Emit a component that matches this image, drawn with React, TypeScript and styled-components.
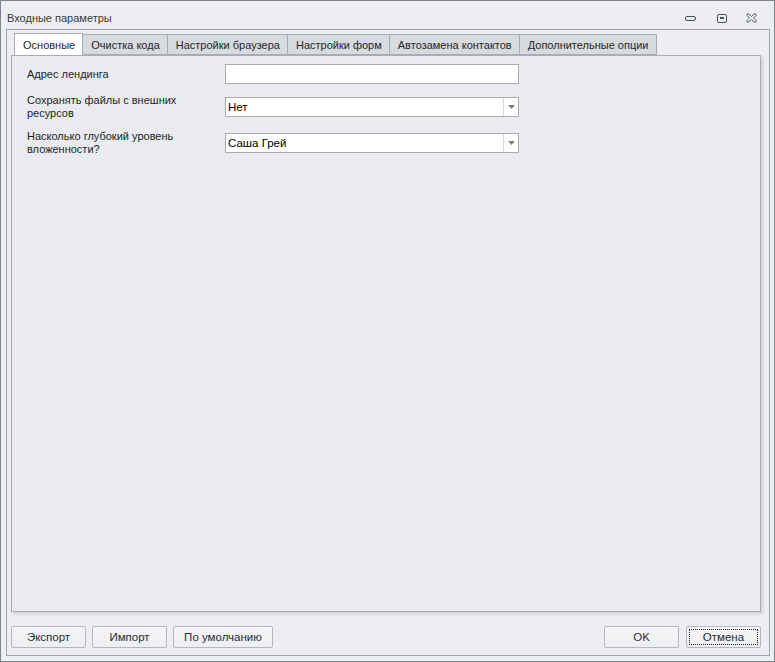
import React from "react";
import styled, { createGlobalStyle } from "styled-components";

const Global = createGlobalStyle`
  html, body { margin: 0; padding: 0; }
  body { font-family: "Liberation Sans", sans-serif; font-size: 11px; color: #1b1b1b; }
  * { box-sizing: border-box; }
`;

const Window = styled.div`
  width: 775px;
  height: 662px;
  border: 1px solid #7f848b;
  background: #eceef1;
  display: flex;
  flex-direction: column;
`;

const TitleBar = styled.div`
  height: 28px;
  display: flex;
  align-items: center;
  padding: 0 0 0 6px;
  font-family: "Liberation Sans", sans-serif;
  font-size: 11px;
  color: #3a3a3a;
`;

const Title = styled.div`
  flex: 1;
  padding-top: 5px;
`;

const Controls = styled.div`
  display: flex;
  align-items: center;
  padding-right: 17px;
  padding-top: 6px;
`;

const Ctrl = styled.div<{ $ml?: number }>`
  display: flex;
  align-items: center;
  margin-left: ${(p) => p.$ml ?? 0}px;
`;

const Frame = styled.div`
  flex: 1;
  margin: 0 4px 5px 5px;
  border: 1px solid #a2a6ac;
  padding: 4px 8px 7px 4px;
  display: flex;
  flex-direction: column;
`;

const Tabs = styled.div`
  display: flex;
  height: 21px;
  padding-left: 3px;
  position: relative;
  z-index: 1;
`;

const Tab = styled.div<{ $active?: boolean }>`
  height: ${(p) => (p.$active ? "22px" : "21px")};
  padding: 0 7px 0 8px;
  display: flex;
  align-items: center;
  font-family: "Liberation Sans", sans-serif;
  font-size: 11px;
  color: #262626;
  white-space: nowrap;
  background: ${(p) => (p.$active ? "#ffffff" : "#d7dade")};
  border: 1px solid #a9adb3;
  border-bottom: ${(p) => (p.$active ? "none" : "1px solid #a9adb3")};
  margin-right: -1px;
  ${(p) => (p.$active ? "margin-top: -1px; padding-top: 1px;" : "")}
`;

const Panel = styled.div`
  flex: 1;
  border: 1px solid #a9adb3;
  background: #e9ebee;
  box-shadow: 2px 2px 3px rgba(0, 0, 0, 0.12);
  padding: 8px 0 0 15px;
  display: flex;
  flex-direction: column;
`;

const Row = styled.div<{ $h: number }>`
  display: grid;
  grid-template-columns: 198px 294px;
  align-items: center;
  height: ${(p) => p.$h}px;
`;

const Label = styled.div`
  font-family: "Liberation Sans", sans-serif;
  font-size: 11px;
  line-height: 13px;
  color: #1e1e1e;
`;

const Field = styled.div`
  height: 20px;
  background: #fff;
  border: 1px solid #a9adb3;
  display: flex;
  align-items: stretch;
`;

const FieldText = styled.div`
  flex: 1;
  display: flex;
  align-items: center;
  padding-left: 2px;
  font-family: "Liberation Sans", sans-serif;
  font-size: 11.5px;
  color: #000;
`;

const DropBtn = styled.div`
  width: 15px;
  border-left: 1px solid #d3d6da;
  display: flex;
  align-items: center;
  justify-content: center;
`;

const Footer = styled.div`
  display: flex;
  align-items: center;
  padding-top: 14px;
`;

const Spacer = styled.div`
  flex: 1;
`;

const Button = styled.div<{ $w: number; $ml?: number; $focus?: boolean }>`
  width: ${(p) => p.$w}px;
  margin-left: ${(p) => p.$ml ?? 0}px;
  height: 22px;
  border: 1px solid #b4b8be;
  border-radius: 2px;
  background: linear-gradient(#f5f6f7, #eceef0);
  display: flex;
  align-items: center;
  justify-content: center;
  font-family: "Liberation Sans", sans-serif;
  font-size: 11.5px;
  color: #1f2d3d;
  position: relative;
  ${(p) =>
    p.$focus
      ? `&::after { content: ""; position: absolute; inset: 2px; border: 1px dotted #222; }`
      : ""}
`;

const Arrow = () => (
  <svg width="7" height="4" viewBox="0 0 7 4">
    <path d="M0 0h7L3.5 4z" fill="#7a7d82" />
  </svg>
);

export default function App() {
  return (
    <>
      <Global />
      <Window>
        <TitleBar>
          <Title>Входные параметры</Title>
          <Controls>
            <Ctrl>
              <svg width="11" height="5" viewBox="0 0 11 5">
                <rect x="0.5" y="0.5" width="10" height="4" rx="1.5" fill="none" stroke="#4a4e55" />
              </svg>
            </Ctrl>
            <Ctrl $ml={21}>
              <svg width="10" height="9" viewBox="0 0 10 9">
                <rect x="0.5" y="0.5" width="9" height="8" rx="1.5" fill="none" stroke="#4a4e55" />
                <rect x="3" y="3" width="4" height="2" fill="#4a4e55" />
              </svg>
            </Ctrl>
            <Ctrl $ml={19}>
              <svg width="11" height="10" viewBox="0 0 11 10">
                <path
                  d="M1 1h2l2.5 2.5L8 1h2v1.5L7.5 5 10 7.5V9H8L5.5 6.5 3 9H1V7.5L3.5 5 1 2.5z"
                  fill="none"
                  stroke="#4a4e55"
                  strokeWidth="0.9"
                />
              </svg>
            </Ctrl>
          </Controls>
        </TitleBar>
        <Frame>
          <Tabs>
            <Tab $active>Основные</Tab>
            <Tab>Очистка кода</Tab>
            <Tab>Настройки браузера</Tab>
            <Tab>Настройки форм</Tab>
            <Tab>Автозамена контактов</Tab>
            <Tab>Дополнительные опции</Tab>
          </Tabs>
          <Panel>
            <Row $h={20}>
              <Label>Адрес лендинга</Label>
              <Field />
            </Row>
            <Row $h={46}>
              <Label>
                Сохранять файлы с внешних
                <br />
                ресурсов
              </Label>
              <Field>
                <FieldText>Нет</FieldText>
                <DropBtn>
                  <Arrow />
                </DropBtn>
              </Field>
            </Row>
            <Row $h={26}>
              <Label>
                Насколько глубокий уровень
                <br />
                вложенности?
              </Label>
              <Field>
                <FieldText>Саша Грей</FieldText>
                <DropBtn>
                  <Arrow />
                </DropBtn>
              </Field>
            </Row>
          </Panel>
          <Footer>
            <Button $w={75}>Экспорт</Button>
            <Button $w={75} $ml={6}>Импорт</Button>
            <Button $w={100} $ml={6}>По умолчанию</Button>
            <Spacer />
            <Button $w={75}>OK</Button>
            <Button $w={75} $ml={7} $focus>
              Отмена
            </Button>
          </Footer>
        </Frame>
      </Window>
    </>
  );
}
